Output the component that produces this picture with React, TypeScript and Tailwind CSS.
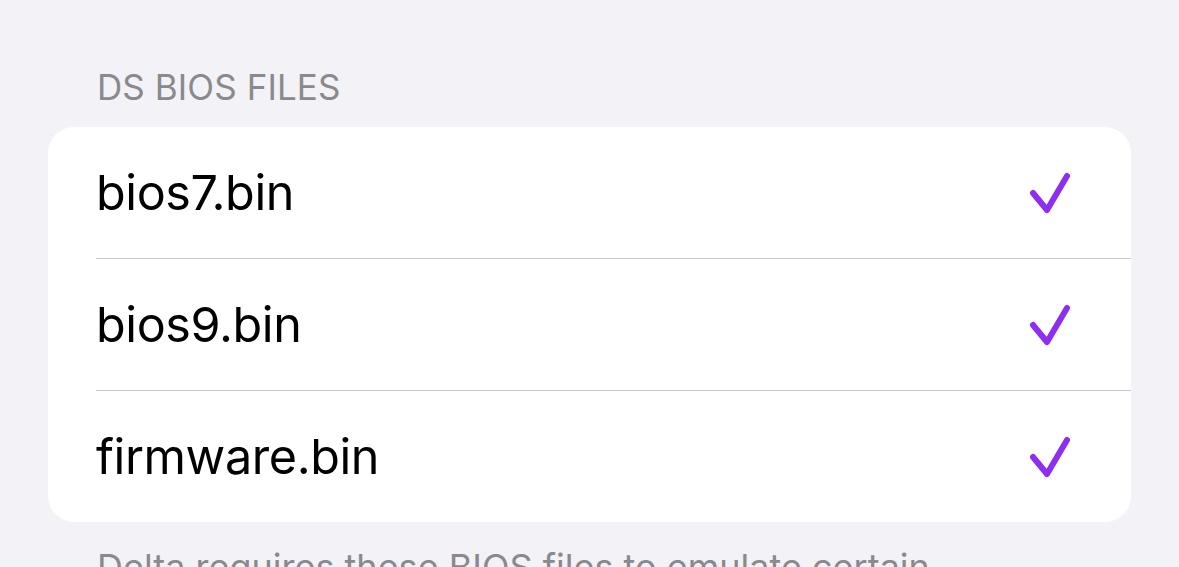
import React from "react";

const Check = () => (
  <svg width="44" height="46" viewBox="0 0 44 46" fill="none">
    <path d="M5 23 L19 40 L39 6" stroke="#8d2ef0" strokeWidth="6" strokeLinecap="round" strokeLinejoin="round" />
  </svg>
);

const rows = ["bios7.bin", "bios9.bin", "firmware.bin"];

export default function App() {
  return (
    <div className="w-[1179px] h-[567px] overflow-hidden bg-[#f2f2f7]" style={{ fontFamily: "Inter, 'Noto Sans', sans-serif" }}>
      <div className="pt-[67px] px-[48px]">
        <div className="pl-[49px] text-[35px] leading-[40px] text-[#8a8a8e] tracking-[0.1px]">DS BIOS FILES</div>
        <div className="mt-[20px] bg-white rounded-[26px] overflow-hidden">
          {rows.map((r, i) => (
            <div key={r} className="pl-[48px]">
              <div className={`flex items-center justify-between pr-[59px] ${i < rows.length - 1 ? "h-[132px] border-b border-[#c8c8cc]" : "h-[131px]"}`}>
                <span className="text-[48.5px] text-black leading-none pt-[2px] tracking-[-0.4px]">{r}</span>
                <Check />
              </div>
            </div>
          ))}
        </div>
        <div className="mt-[25px] pl-[49px] text-[36px] leading-[40px] text-[#8a8a8e] whitespace-nowrap">Delta requires these BIOS files to emulate certain</div>
      </div>
    </div>
  );
}
